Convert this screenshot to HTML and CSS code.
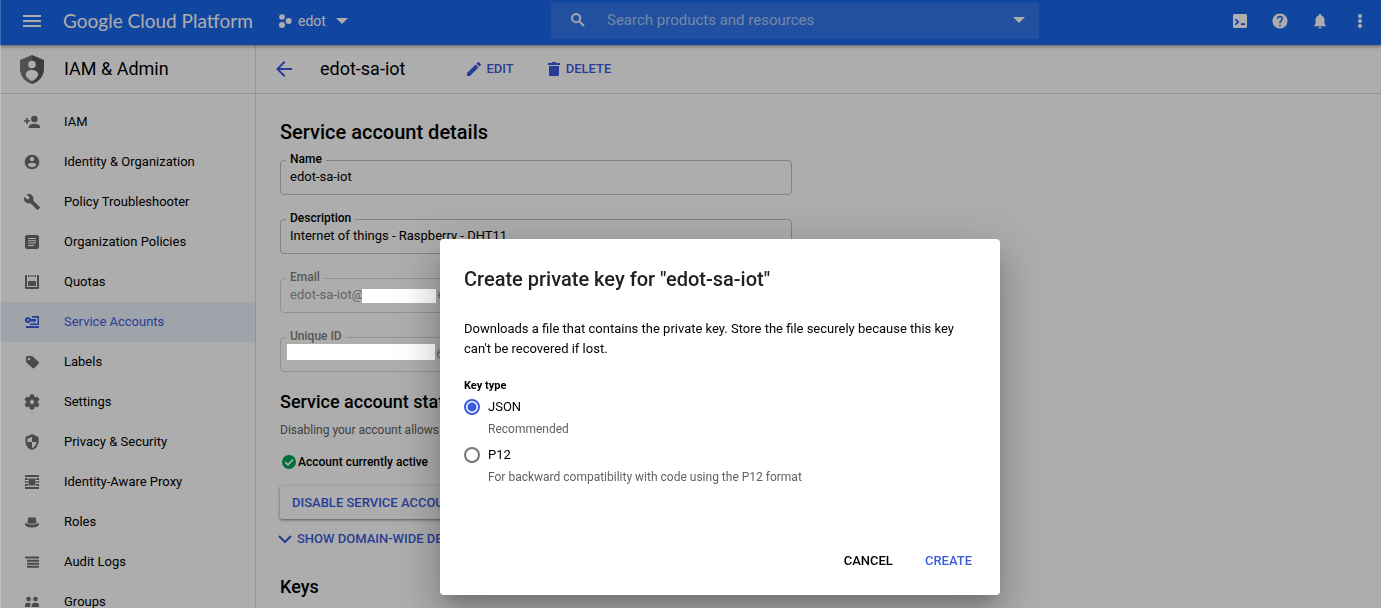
FILE: index.html
```html
<!DOCTYPE html>
<html lang="en">
<head>
<meta charset="utf-8">
<title>edot-sa-iot – IAM &amp; Admin – Google Cloud Platform</title>
<link rel="stylesheet" href="styles.css">
</head>
<body>
<header class="topbar">
  <button class="icon-button menu-button" aria-label="Main menu">
    <svg width="18" height="12" viewBox="0 0 18 12"><path d="M0 0h18v2H0zM0 5h18v2H0zM0 10h18v2H0z"/></svg>
  </button>
  <a class="brand" href="#">Google Cloud Platform</a>
  <button class="project">
    <svg width="14" height="14" viewBox="0 0 14 14"><circle cx="4" cy="3" r="2.800"/><circle cx="10.600" cy="7" r="3"/><circle cx="4" cy="11" r="3"/></svg>
    <span>edot</span>
    <svg class="caret" width="12" height="6" viewBox="0 0 12 6"><path d="M0 0h12L6 6z"/></svg>
  </button>
  <form class="search">
    <svg width="18" height="18" viewBox="0 0 24 24"><path d="M15.500 14h-.79l-.28-.27A6.470 6.470 0 0 0 16 9.500 6.500 6.500 0 1 0 9.500 16c1.610 0 3.090-.59 4.230-1.570l.27.28v.79l5 4.990L20.490 19zm-6 0a4.500 4.500 0 1 1 0-9 4.500 4.500 0 0 1 0 9z" stroke="currentColor" stroke-width=".6"/></svg>
    <input type="search" placeholder="Search products and resources" aria-label="Search products and resources">
    <button type="button" class="icon-button" aria-label="Search options"><svg width="12" height="6" viewBox="0 0 12 6"><path d="M0 0h12L6 6z"/></svg></button>
  </form>
  <div class="top-actions">
    <button class="icon-button" aria-label="Activate Cloud Shell"><svg width="14" height="14" viewBox="0 0 14 14"><path fill-rule="evenodd" d="M1.500 0h11A1.500 1.500 0 0 1 14 1.500v11a1.500 1.500 0 0 1-1.500 1.500h-11A1.500 1.500 0 0 1 0 12.500v-11A1.500 1.500 0 0 1 1.500 0zM1.300 5.300 3.900 8l-2.600 2.700h2.400L6.400 8 3.700 5.300zM8 9.300V11h4V9.300z"/></svg></button>
    <button class="icon-button" aria-label="Help"><svg width="18" height="18" viewBox="0 0 24 24"><path d="M12 2C6.480 2 2 6.480 2 12s4.480 10 10 10 10-4.480 10-10S17.520 2 12 2zm1 17h-2v-2h2v2zm2.070-7.750-.9.920C13.450 12.900 13 13.500 13 15h-2v-.5c0-1.100.45-2.100 1.170-2.830l1.240-1.260c.37-.36.59-.86.59-1.410a2 2 0 0 0-4 0H8a4 4 0 0 1 8 0c0 .88-.36 1.680-.93 2.250z"/></svg></button>
    <button class="icon-button" aria-label="Notifications"><svg width="18" height="18" viewBox="0 0 24 24"><path d="M12 22c1.100 0 2-.9 2-2h-4a2 2 0 0 0 2 2zm6-6v-5c0-3.070-1.640-5.640-4.500-6.320V4a1.500 1.500 0 0 0-3 0v.68C7.630 5.360 6 7.920 6 11v5l-2 2v1h16v-1z"/></svg></button>
    <button class="icon-button" aria-label="More"><svg width="4" height="14" viewBox="0 0 4 14"><circle cx="2" cy="2" r="2"/><circle cx="2" cy="7" r="2"/><circle cx="2" cy="12" r="2"/></svg></button>
  </div>
</header>

<div class="shell">
  <aside class="sidebar">
    <div class="section-title">
      <svg width="24" height="29" viewBox="0 0 24 29"><path fill="#767676" d="M12 0 0 5v9c0 7 5 13 12 15z"/><path fill="#5a5a5a" d="m12 0 12 5v9c0 7-5 13-12 15z"/><circle cx="12" cy="9.500" r="3.800" fill="#fff"/><path fill="#fff" d="M5.800 20c0-3.300 2.700-5 6.200-5s6.200 1.700 6.200 5c-1 2.600-3.200 4.900-6.200 6.200-3-1.300-5.200-3.600-6.200-6.200z"/></svg>
      <span>IAM &amp; Admin</span>
    </div>
    <nav class="nav">
      <a href="#"><svg viewBox="0 0 16 16"><circle cx="10.400" cy="5" r="3.300"/><path d="M4.800 14v-1.200c0-2.200 3.400-3 5.600-3s5.600.8 5.600 3V14zM2.200 4h1.700v2.200H6v1.600H3.900V10H2.200V7.800H0V6.200h2.200z"/></svg>IAM</a>
      <a href="#"><svg viewBox="1 1 22 22"><path d="M12 2C6.480 2 2 6.480 2 12s4.480 10 10 10 10-4.480 10-10S17.520 2 12 2zm0 3a3 3 0 1 1 0 6 3 3 0 0 1 0-6zm0 14.200a7.200 7.200 0 0 1-6-3.220c.03-1.990 4-3.080 6-3.080 1.990 0 5.970 1.090 6 3.080a7.200 7.200 0 0 1-6 3.220z"/></svg>Identity &amp; Organization</a>
      <a href="#"><svg viewBox="1 1 22 22"><path d="m22.700 19-9.100-9.100c.9-2.300.4-5-1.500-6.900-2-2-5-2.400-7.400-1.300L9 6 6 9 1.600 4.700C.4 7.100.9 10.100 2.900 12.100c1.900 1.900 4.600 2.400 6.900 1.500l9.100 9.100c.4.4 1 .4 1.400 0l2.300-2.300c.5-.4.5-1.100.1-1.400z"/></svg>Policy Troubleshooter</a>
      <a href="#"><svg viewBox="0 0 16 16"><path fill-rule="evenodd" d="M3 1h10a2 2 0 0 1 2 2v10a2 2 0 0 1-2 2H3a2 2 0 0 1-2-2V3a2 2 0 0 1 2-2zm1 3v1h8V4zm0 2.300v1h8v-1zm0 2.300v1h8v-1zM4 11v1h6v-1z"/></svg>Organization Policies</a>
      <a href="#"><svg viewBox="0 0 16 16"><path d="M1 1h2v12h10V1h2v12.500a1.500 1.500 0 0 1-1.500 1.500h-11A1.500 1.500 0 0 1 1 13.500zM4 7h8v5H4zM4 1h1.300v2H4zM6.200 1h1.300v2H6.200zM8.500 1h1.300v2H8.500zM10.700 1H12v2h-1.300z"/></svg>Quotas</a>
      <a href="#" class="current" aria-current="page"><svg viewBox="0 0 16 16"><path fill-rule="evenodd" d="M4 3a3 3 0 0 1 2.800 2H12v2h-1v1.500H9.500V7H8.700v1H7.500V7h-.7A3 3 0 1 1 4 3zm0 2a1 1 0 1 0 0 2 1 1 0 0 0 0-2z"/><path d="M8 2h7v9H6V9.500h7.500V3.800H8zM2 12h13v2H2z"/></svg>Service Accounts</a>
      <a href="#"><svg viewBox="0 0 16 16"><path fill-rule="evenodd" d="M3.300 2h4.200c.5 0 .9.200 1.200.5l5.800 5.300c.6.600.6 1.400 0 2l-4 4.200c-.6.600-1.400.6-2 0L2.400 8.600A1.500 1.500 0 0 1 2 7.500V3.300C2 2.600 2.600 2 3.300 2zm1.600 1.700a1.300 1.300 0 1 0 0 2.600 1.300 1.300 0 0 0 0-2.600z"/></svg>Labels</a>
      <a href="#"><svg viewBox="1 1 22 22"><path stroke="currentColor" stroke-width=".8" d="M19.430 12.980c.04-.32.070-.64.070-.98s-.03-.66-.07-.98l2.110-1.650c.19-.15.24-.42.120-.64l-2-3.460c-.12-.22-.39-.3-.61-.22l-2.490 1c-.52-.4-1.080-.73-1.690-.98l-.38-2.650A.488.488 0 0 0 14 2h-4c-.25 0-.46.180-.49.420l-.38 2.650c-.61.250-1.170.590-1.690.980l-2.490-1c-.23-.09-.49 0-.61.220l-2 3.460c-.13.220-.07.490.12.640l2.110 1.650c-.04.320-.07.650-.07.980s.03.660.070.980l-2.110 1.650c-.19.150-.24.420-.12.640l2 3.460c.12.220.39.300.61.220l2.490-1c.52.400 1.080.730 1.690.980l.38 2.650c.03.240.240.420.490.420h4c.25 0 .46-.18.490-.42l.38-2.650c.61-.25 1.170-.59 1.690-.98l2.490 1c.23.090.49 0 .61-.22l2-3.460c.12-.22.070-.49-.12-.64zM12 15.300a3.300 3.300 0 1 1 0-6.600 3.300 3.300 0 0 1 0 6.600z"/></svg>Settings</a>
      <a href="#"><svg viewBox="1 1 22 22"><path fill-rule="evenodd" d="M12 1 3 5v6c0 5.550 3.840 10.740 9 12 5.160-1.260 9-6.450 9-12V5zm0 4.200V12h6.300c-.5 3.900-3 7.300-6.300 8.400V12H5.700V7.500z"/></svg>Privacy &amp; Security</a>
      <a href="#"><svg viewBox="0 0 16 16"><path d="M1 1h14v2H1zM1 13h14v2H1zM5 4.500h6v7H5zM1 4h2v2H1zM13 4h2v2h-2zM1 10h2v2H1zM13 10h2v2h-2zM3 4.500h1.500V6H3zM11.500 4.500H13V6h-1.500zM3 10h1.500v1.500H3zM11.500 10H13v1.500h-1.500zM2.500 7.200h11v1.600h-11zM1 7h1v2H1zM14 7h1v2h-1z"/></svg>Identity-Aware Proxy</a>
      <a href="#"><svg viewBox="0 0 16 16"><path d="M3.400 9 4.300 4c.2-.8.800-1 1.500-.8 1.400.6 3 .6 4.400 0 .7-.2 1.300 0 1.500.8l.9 5c-2.700.9-6.500.9-9.200 0zM1 10.300c0-1 .8-1.200 1.600-.8 3 1.300 7.800 1.300 10.800 0 .8-.4 1.600-.2 1.600.8 0 1.900-2.800 3.200-7 3.200s-7-1.300-7-3.200z"/></svg>Roles</a>
      <a href="#"><svg viewBox="0 0 16 16"><path d="M1 2.500h14v2H1zM3 5.700h12v2H3zM3 8.700h12v2H3zM3 11.700h12v2H3z"/></svg>Audit Logs</a>
      <a href="#"><svg viewBox="0 0 16 16"><circle cx="4.500" cy="5" r="2.300"/><circle cx="11.500" cy="5" r="2.300"/><path d="M1 13v-2c0-1.600 1.600-2.200 3.500-2.200.9 0 1.700.1 2.400.5-.7.500-.9 1-.9 1.700v2zM7.500 13v-2c0-1.600 2-2.200 4-2.200S15 9.400 15 11v2z"/></svg>Groups</a>
    </nav>
  </aside>

  <main class="main">
    <div class="toolbar">
      <button class="icon-button back" aria-label="Back"><svg width="16" height="16" viewBox="0 0 16 16"><path d="M16 7H3.800l5.600-5.600L8 0 0 8l8 8 1.400-1.400L3.800 9H16z"/></svg></button>
      <span class="page-name">edot-sa-iot</span>
      <button class="text-button edit"><svg width="14" height="14" viewBox="3 3 18 18"><path d="M3 17.250V21h3.750L17.810 9.940l-3.750-3.750zM20.710 7.040a1 1 0 0 0 0-1.410l-2.340-2.340a1 1 0 0 0-1.410 0l-1.830 1.830 3.750 3.750z"/></svg>EDIT</button>
      <button class="text-button"><svg width="12" height="14" viewBox="0 0 12 14"><path d="M1 4h10v8.500a1.500 1.500 0 0 1-1.500 1.500h-7A1.500 1.500 0 0 1 1 12.500zM0 1h3.500l1-1h3l1 1H12v2H0z"/></svg>DELETE</button>
    </div>
    <div class="content">
      <h1>Service account details</h1>
      <div class="fields">
        <div class="field"><label for="name">Name</label><input id="name" type="text" value="edot-sa-iot"></div>
        <div class="field"><label for="description">Description</label><input id="description" type="text" value="Internet of things - Raspberry - DHT11"></div>
        <div class="field disabled"><label for="email">Email</label><input id="email" type="text" value="edot-sa-iot@                       e" disabled><span class="mask mask-email"></span></div>
        <div class="field disabled"><label for="uid">Unique ID</label><input id="uid" class="uid" type="text" value="6" disabled><span class="mask mask-uid"></span></div>
      </div>
      <h2>Service account status</h2>
      <p class="note">Disabling your account allows</p>
      <p class="status"><svg width="14" height="14" viewBox="0 0 14 14"><circle cx="7" cy="7" r="7" fill="#00a35c"/><path d="m3.200 7.200 2.700 2.600 5-5.200" fill="none" stroke="#fff" stroke-width="1.700"/></svg>Account currently active</p>
      <button class="raised">DISABLE SERVICE ACCOUNT</button>
      <button class="text-button expander"><svg width="14" height="9" viewBox="0 0 14 9"><path d="m1 1 6 6 6-6" fill="none" stroke="currentColor" stroke-width="2"/></svg>SHOW DOMAIN-WIDE DELEGATION</button>
      <h2 class="keys">Keys</h2>
    </div>
  </main>
</div>

<div class="scrim"></div>
<form class="dialog" role="dialog" aria-modal="true" aria-labelledby="dialog-title">
  <h2 id="dialog-title">Create private key for "edot-sa-iot"</h2>
  <p class="dialog-text">Downloads a file that contains the private key. Store the file securely because this key can't be recovered if lost.</p>
  <fieldset>
    <legend>Key type</legend>
    <label class="option"><input type="radio" name="key" checked>JSON</label>
    <p class="hint">Recommended</p>
    <label class="option"><input type="radio" name="key">P12</label>
    <p class="hint">For backward compatibility with code using the P12 format</p>
  </fieldset>
  <div class="dialog-actions">
    <button type="button" class="cancel">CANCEL</button>
    <button type="button">CREATE</button>
  </div>
</form>
</body>
</html>
```

FILE: styles.css
```css
* { box-sizing: border-box; }

body {
  margin: 0;
  height: 100vh;
  overflow: hidden;
  display: flex;
  flex-direction: column;
  background: #fff;
  color: #000;
  font: 13px/16px Roboto, "Liberation Sans", sans-serif;
}

h1, h2, p, fieldset { margin: 0; padding: 0; border: 0; }
button, input { font: inherit; color: inherit; }
button { margin: 0; padding: 0; border: 0; background: none; cursor: pointer; }
a { color: inherit; text-decoration: none; }
svg { display: block; flex: none; fill: currentColor; }

.icon-button { display: grid; place-items: center; }

/* Top bar */
.topbar {
  position: relative;
  flex: none;
  height: 45px;
  padding: 0 11px 3px 14px;
  display: flex;
  align-items: center;
  background: #1a67ec;
  color: #fff;
  box-shadow: 0 1px 4px rgba(0, 0, 0, .5);
}
.menu-button { width: 36px; height: 36px; }
.brand { margin-left: 13px; width: 215px; font: 19px/24px Lato, Roboto, sans-serif; white-space: nowrap; }
.project { display: flex; align-items: center; gap: 6px; font-size: 14px; }
.project .caret { margin-left: 4px; }
.search {
  width: 488px;
  height: 36px;
  margin-left: auto;
  padding: 0 14px 2px 18px;
  display: flex;
  align-items: center;
  border-radius: 2px;
  background: rgba(255, 255, 255, .1);
}
.search input {
  flex: 1;
  margin-left: 20px;
  padding: 0;
  border: 0;
  outline: 0;
  background: none;
  font-size: 15px;
}
.search input::placeholder { color: rgba(255, 255, 255, .6); }
.top-actions { display: flex; margin-left: 181px; }
.top-actions .icon-button { width: 40px; height: 40px; }
.top-actions .icon-button:last-child { margin-right: -10px; }

/* Page shell */
.shell { flex: 1; display: flex; min-height: 0; }
.sidebar { flex: none; width: 256px; border-right: 1px solid #dadada; overflow: hidden; }
.section-title, .toolbar {
  height: 49px;
  display: flex;
  align-items: center;
  border-bottom: 1px solid #d8d8d8;
  font-size: 18px;
}
.section-title { padding-left: 20px; gap: 20px; }
.nav { padding-top: 8px; }
.nav a { display: flex; align-items: center; height: 40px; padding-left: 24px; gap: 24px; }
.nav svg { width: 16px; height: 16px; color: #6e6e6e; }
.nav .current, .nav .current svg { color: #3c5cde; }
.nav .current { background: #ebf2fd; }

.main { flex: 1; min-width: 0; overflow: hidden; }
.toolbar { padding-left: 20px; }
.back { color: #3c5cde; width: 16px; }
.page-name { margin-left: 28px; }
.text-button {
  display: flex;
  align-items: center;
  gap: 6px;
  color: #3c5cde;
  font-size: 13px;
  font-weight: 500;
  white-space: nowrap;
}
.edit { margin: 0 34px 0 62px; gap: 5px; }

/* Account form */
.content { padding: 26px 24px 0; }
h1, h2 { font-size: 20px; line-height: 24px; font-weight: 500; }
.content h2 { font-size: 18px; }
.fields { max-width: 512px; margin: 16px 0 18px; display: grid; gap: 24px; }
.field { position: relative; height: 35px; border: 1px solid #c0c0c0; border-radius: 4px; }
.field label {
  position: absolute;
  top: -10px;
  left: 5px;
  padding: 0 4px;
  background: #fff;
  font-size: 12px;
  font-weight: 500;
}
.field input { width: 100%; height: 33px; padding: 0 9px 2px; border: 0; background: none; outline: 0; }
.field .uid { padding-left: 155px; }
.disabled { border-color: #d8d8d8; color: #808080; }
.disabled input { color: #949494; }
.mask { position: absolute; z-index: 3; background: #fff; }
.mask-email { left: 81px; top: 10px; width: 74px; height: 14px; }
.mask-uid { left: 6px; top: 6px; width: 148px; height: 16px; }
.note { margin: 8px 0 16px; font-size: 12px; color: #606060; }
.status { display: flex; align-items: center; gap: 2px; padding-left: 2px; font-size: 12px; font-weight: 500; }
.raised {
  display: block;
  height: 33px;
  margin: 16px 0 12px;
  padding: 0 12px;
  border-radius: 2px;
  color: #3c5cde;
  font-weight: 500;
  box-shadow: 0 1px 3px rgba(0, 0, 0, .5);
}
.expander { margin-left: -2px; gap: 5px; }
.keys { margin-top: 28px; }

/* Dialog */
.scrim { position: fixed; inset: 0; z-index: 2; background: rgba(0, 0, 0, .32); border-left: 1px solid rgba(255, 255, 255, .2); }
.dialog {
  position: fixed;
  z-index: 4;
  top: 239px;
  left: 440px;
  width: 560px;
  padding: 24px 24px 16px;
  border-radius: 4px;
  background: #fff;
  box-shadow: 0 11px 15px -7px rgba(0, 0, 0, .2), 0 24px 38px 3px rgba(0, 0, 0, .14), 0 9px 46px 8px rgba(0, 0, 0, .12);
}
.dialog h2 { line-height: 32px; color: #212121; }
.dialog-text { margin: 24px 0 19px; line-height: 20px; }
.dialog legend { padding: 0; margin-bottom: 3px; font-size: 11px; font-weight: 700; }
.option { display: flex; align-items: center; gap: 8px; line-height: 20px; }
.option input {
  appearance: none;
  width: 16px;
  height: 16px;
  margin: 0;
  border: 2px solid #757575;
  border-radius: 50%;
}
.option input:checked { border-color: #3c5cde; background: radial-gradient(circle, #3c5cde 4px, #fff 5px); }
.hint { margin: 2px 0 6px 24px; font-size: 12px; line-height: 20px; color: #616161; }
.dialog-actions { display: flex; justify-content: flex-end; gap: 8px; margin: 50px -8px 0 0; }
.dialog-actions button { height: 36px; padding: 0 12px; color: #3c5cde; font-weight: 500; }
.dialog-actions .cancel { color: #000; }
```
